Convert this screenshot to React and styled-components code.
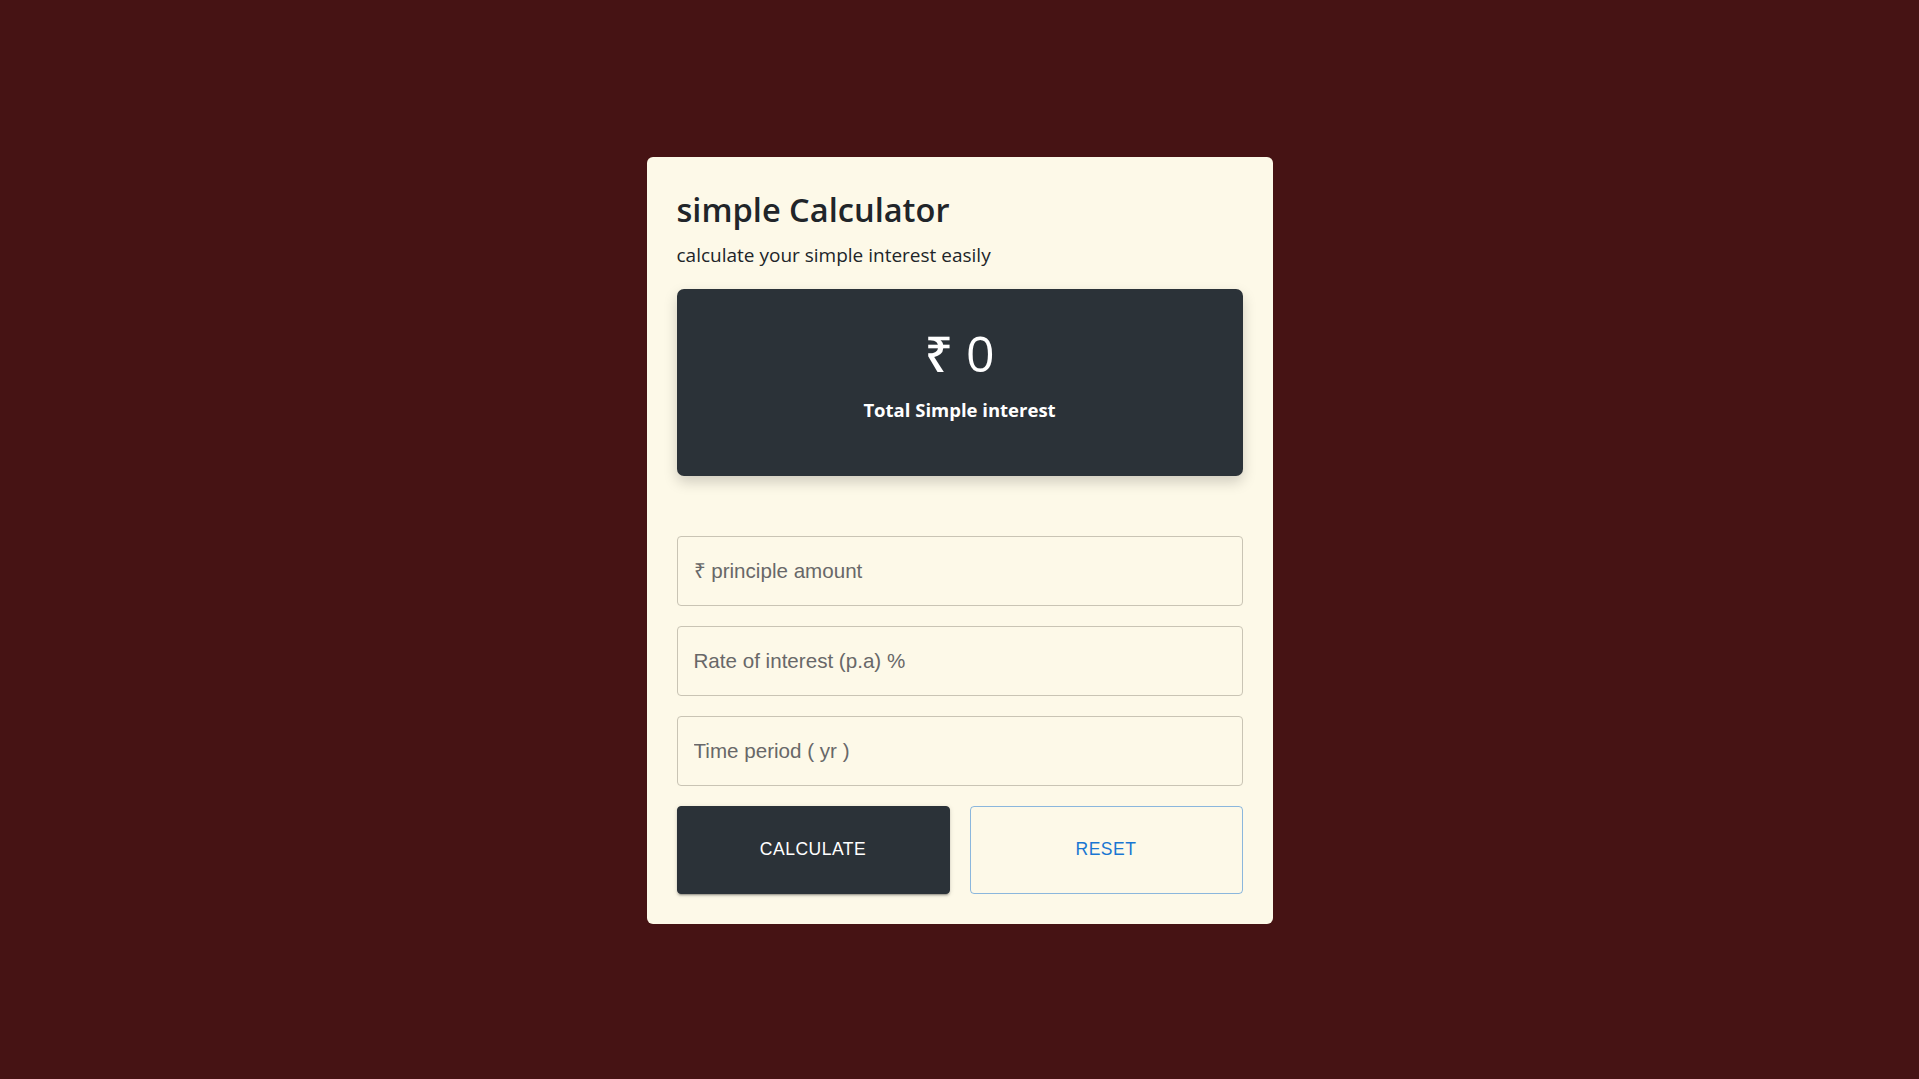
import styled, { createGlobalStyle } from "styled-components";
import { useState } from "react";

const GlobalStyle = createGlobalStyle`
  * {
    box-sizing: border-box;
  }
  body {
    margin: 0;
    background-color: #461314;
    font-family: "Open Sans", "Noto Sans", sans-serif;
    color: #212529;
  }
`;

const Page = styled.div`
  min-height: 100vh;
  display: flex;
  justify-content: center;
  padding-top: 157px;
`;

const Card = styled.div`
  width: 626px;
  height: 767px;
  background-color: #fdf9e8;
  border-radius: 6px;
  padding: 30px 30px;
  display: flex;
  flex-direction: column;
`;

const Title = styled.h1`
  margin: 0;
  font-size: 32.6px;
  font-weight: 600;
  line-height: 1.2;
  padding-top: 3px;
`;

const Subtitle = styled.p`
  margin: 12px 0 0;
  font-size: 19px;
  line-height: 1.5;
`;

const ResultBox = styled.div`
  margin-top: 19px;
  height: 187px;
  flex-shrink: 0;
  background-color: #2b3238;
  border-radius: 7px;
  box-shadow: 0 6px 14px rgba(0, 0, 0, 0.18);
  color: #fff;
  display: flex;
  flex-direction: column;
  align-items: center;
  padding-top: 34px;
`;

const Amount = styled.h2`
  margin: 0;
  font-size: 50px;
  font-weight: 500;
  line-height: 1.2;
`;

const AmountLabel = styled.h5`
  margin: 16px 0 0;
  font-size: 18.5px;
  font-weight: 700;
  line-height: 1.2;
`;

const Form = styled.form`
  margin-top: 60px;
  display: flex;
  flex-direction: column;
  gap: 20px;
`;

const Field = styled.input`
  height: 70px;
  width: 100%;
  border: 1px solid #c9c4b4;
  border-radius: 4px;
  background: transparent;
  padding: 0 16px;
  font-family: "Liberation Sans", Arial, sans-serif;
  font-size: 20.6px;
  color: #333;
  outline: none;
  &::placeholder {
    color: #686868;
  }
`;

const ButtonRow = styled.div`
  display: grid;
  grid-template-columns: 1fr 1fr;
  gap: 20px;
`;

const Button = styled.button`
  height: 88px;
  border-radius: 4px;
  font-family: "Liberation Sans", Arial, sans-serif;
  font-size: 17.5px;
  letter-spacing: 0.5px;
  text-transform: uppercase;
  cursor: pointer;
  border: 1px solid ${(p) => (p.$outlined ? "rgba(25, 118, 210, 0.5)" : "#2b3238")};
  background: ${(p) => (p.$outlined ? "transparent" : "#2b3238")};
  color: ${(p) => (p.$outlined ? "#1976d2" : "#fff")};
  box-shadow: ${(p) =>
    p.$outlined
      ? "none"
      : "0 3px 1px -2px rgba(0,0,0,0.2), 0 2px 2px 0 rgba(0,0,0,0.14), 0 1px 5px 0 rgba(0,0,0,0.12)"};
`;

export default function App() {
  const [principle, setPrinciple] = useState("");
  const [rate, setRate] = useState("");
  const [time, setTime] = useState("");
  const [interest, setInterest] = useState(0);

  const calculate = (e) => {
    e.preventDefault();
    setInterest((Number(principle) * Number(rate) * Number(time)) / 100);
  };

  const reset = () => {
    setPrinciple("");
    setRate("");
    setTime("");
    setInterest(0);
  };

  return (
    <>
      <GlobalStyle />
      <Page>
        <Card>
          <Title>simple Calculator</Title>
          <Subtitle>calculate your simple interest easily</Subtitle>
          <ResultBox>
            <Amount>₹ {interest}</Amount>
            <AmountLabel>Total Simple interest</AmountLabel>
          </ResultBox>
          <Form onSubmit={calculate}>
            <Field
              placeholder="₹ principle amount"
              value={principle}
              onChange={(e) => setPrinciple(e.target.value)}
            />
            <Field
              placeholder="Rate of interest (p.a) %"
              value={rate}
              onChange={(e) => setRate(e.target.value)}
            />
            <Field
              placeholder="Time period ( yr )"
              value={time}
              onChange={(e) => setTime(e.target.value)}
            />
            <ButtonRow>
              <Button type="submit">Calculate</Button>
              <Button type="button" $outlined onClick={reset}>
                Reset
              </Button>
            </ButtonRow>
          </Form>
        </Card>
      </Page>
    </>
  );
}
